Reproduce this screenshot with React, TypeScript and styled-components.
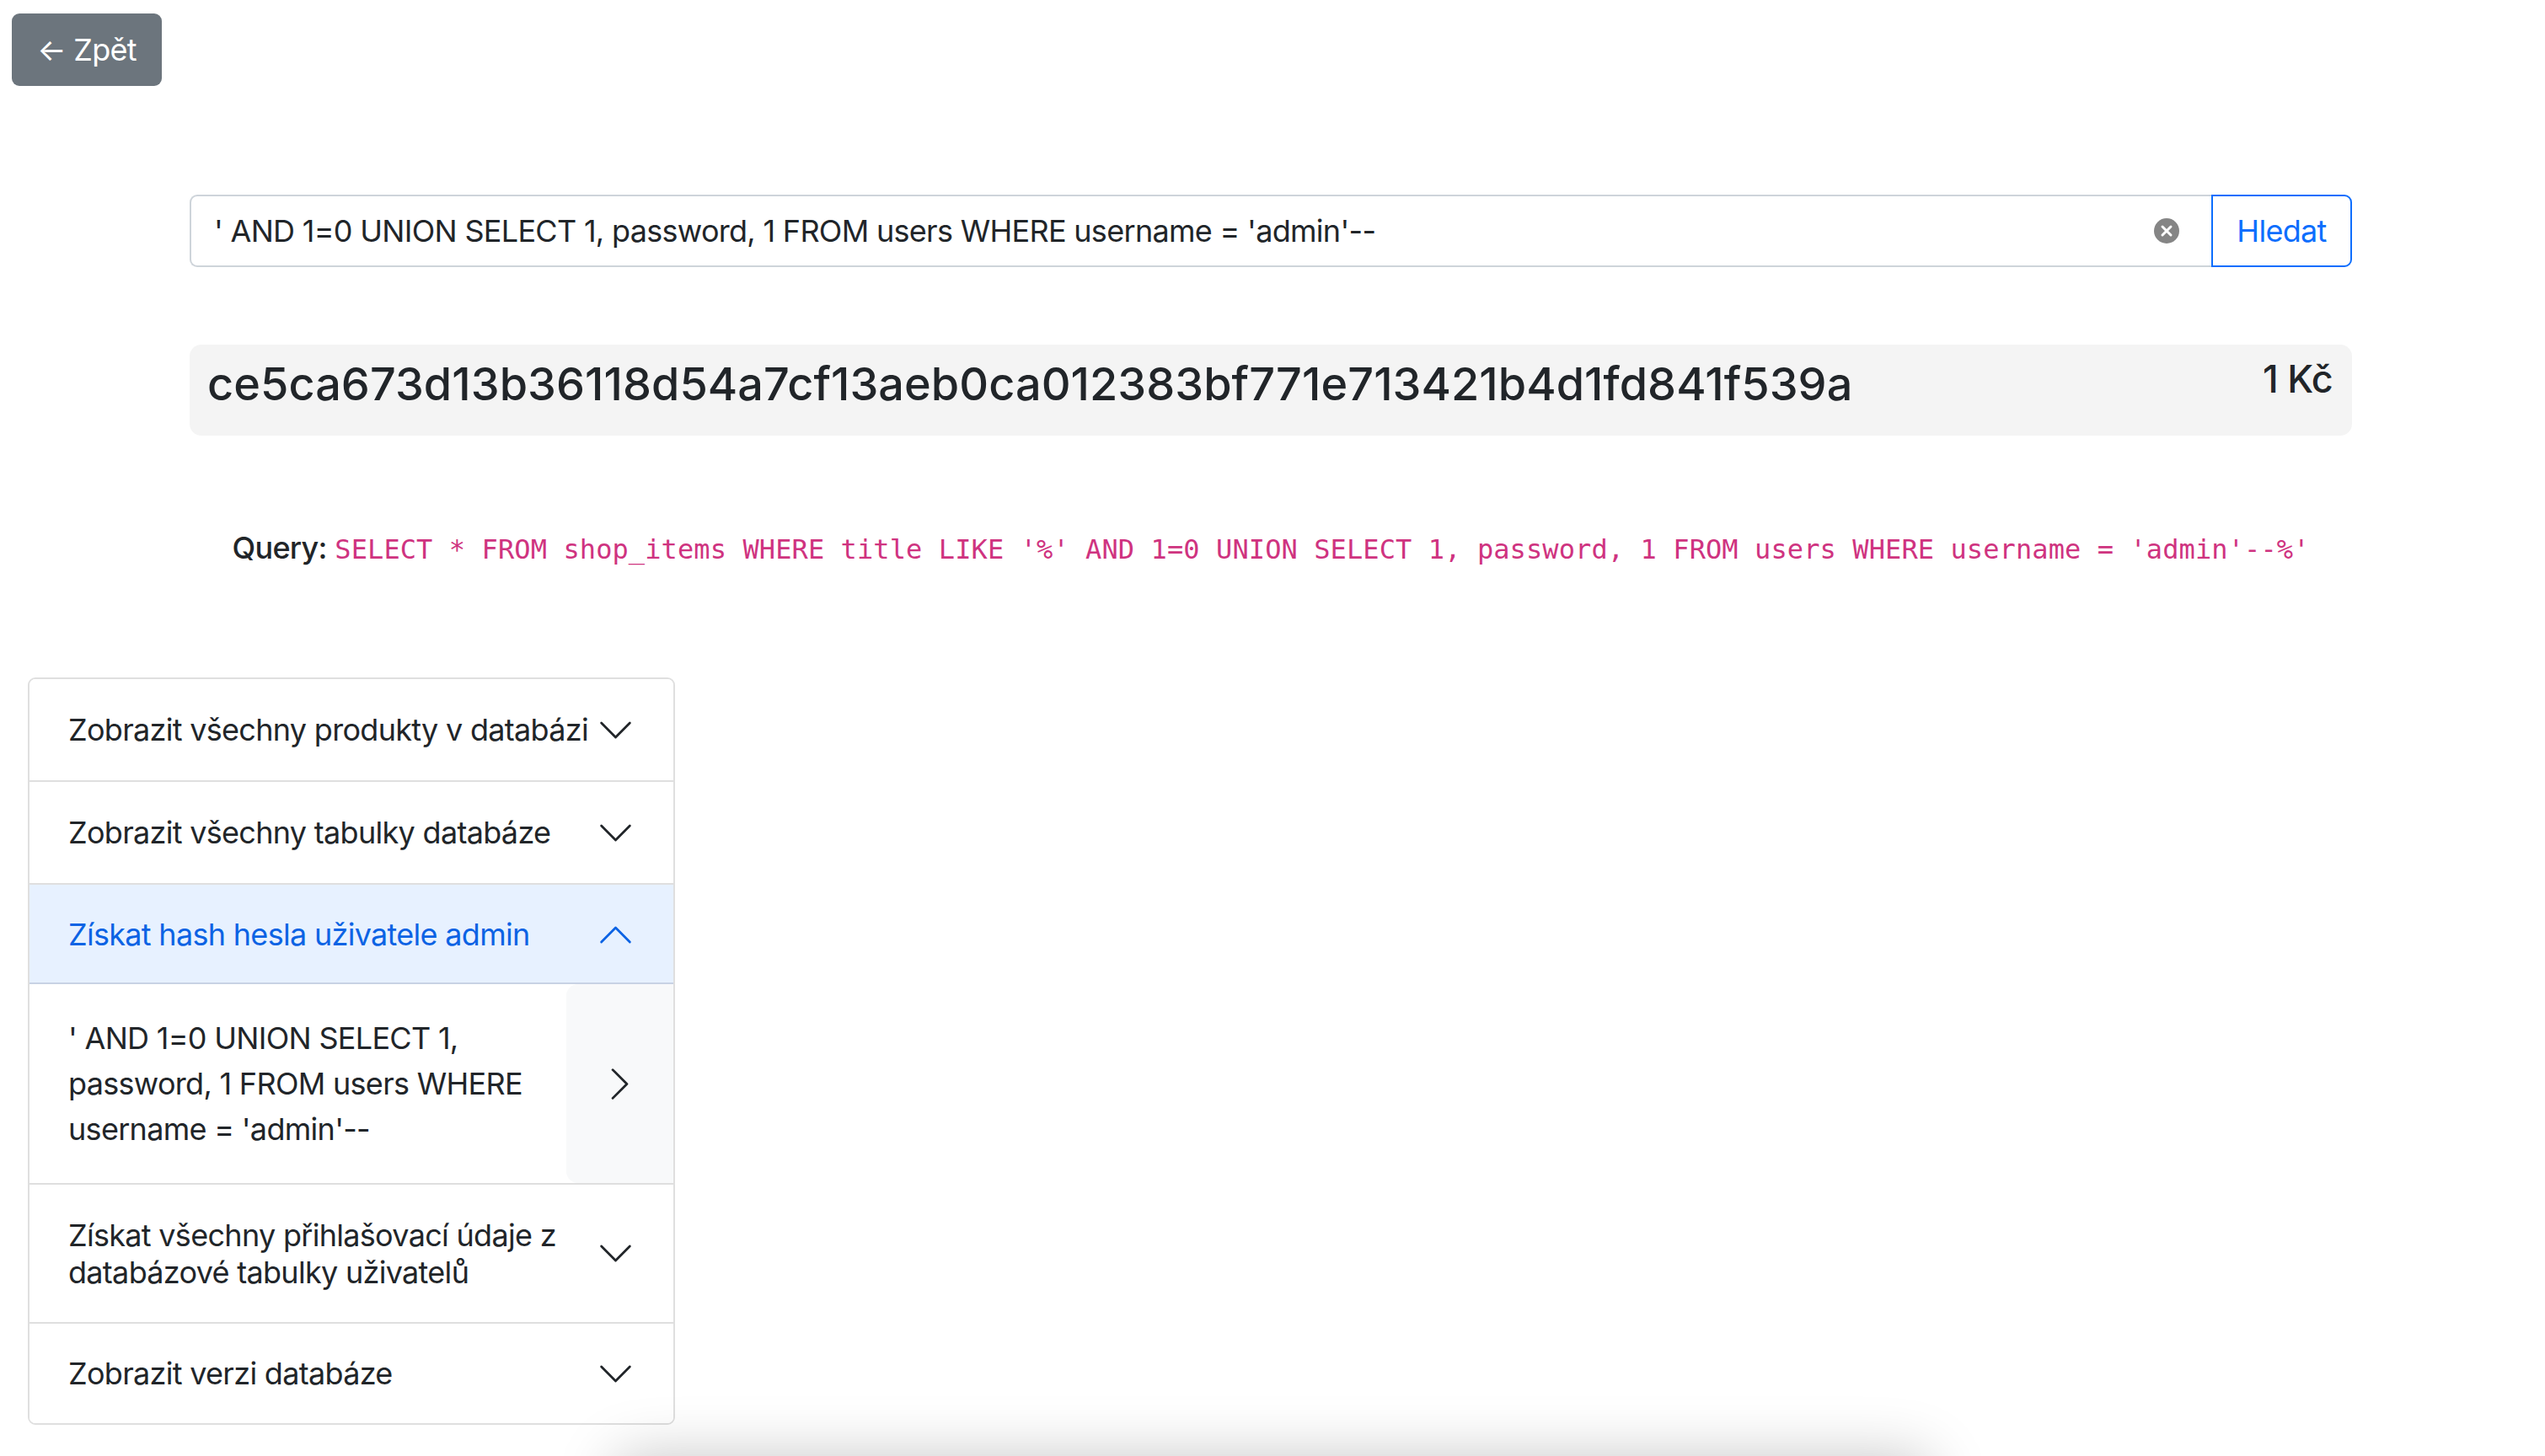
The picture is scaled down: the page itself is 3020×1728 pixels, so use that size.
import React from 'react';
import styled, { createGlobalStyle } from 'styled-components';

const GlobalStyle = createGlobalStyle`
    * {
        box-sizing: border-box;
    }
    body {
        margin: 0;
        background-color: #FFFFFF;
        color: #212529;
        font-family: Inter, "Liberation Sans", sans-serif;
        font-size: 36px;
        line-height: 54px;
        letter-spacing: -0.7px;
    }
`;

const Page = styled.div`
    display: flex;
    flex-direction: column;
    align-items: flex-start;
    height: 1728px;
    padding: 16px 0 0 14px;
    overflow: hidden;
`;

const BackButton = styled.button`
    width: 178px;
    height: 86px;
    padding: 0;
    border: none;
    border-radius: 9px;
    background-color: #6c757d;
    color: #FFFFFF;
    font: inherit;
    letter-spacing: inherit;
`;

const Content = styled.div`
    display: flex;
    flex-direction: column;
    width: 2566px;
    margin: 129px 0 0 211px;
`;

const SearchGroup = styled.form`
    display: flex;
    height: 86px;
`;

const SearchField = styled.div`
    flex: 1;
    display: flex;
    align-items: center;
    padding: 0 38px 0 27px;
    border: 2px solid #ced4da;
    border-right: none;
    border-radius: 9px 0 0 9px;
`;

const SearchInput = styled.input`
    flex: 1;
    border: none;
    outline: none;
    padding: 0;
    color: #212529;
    font: inherit;
    letter-spacing: inherit;
`;

const SearchButton = styled.button`
    width: 167px;
    padding: 0;
    border: 2px solid #0d6efd;
    border-radius: 0 9px 9px 0;
    background-color: #FFFFFF;
    color: #0d6efd;
    font: inherit;
    letter-spacing: inherit;
`;

const ResultCard = styled.div`
    display: flex;
    justify-content: space-between;
    align-items: flex-start;
    height: 108px;
    margin-top: 92px;
    padding: 14px 23px 0 21px;
    border-radius: 14px;
    background-color: #f4f4f4;
`;

const ResultTitle = styled.h3`
    margin: 0;
    font-size: 54px;
    font-weight: 500;
    line-height: 65px;
    letter-spacing: 0.05px;
`;

const ResultPrice = styled.span`
    font-size: 45px;
    font-weight: 500;
    line-height: 54px;
`;

const QueryRow = styled.p`
    margin: 106px 0 0;
    text-align: center;
`;

const QueryLabel = styled.span`
    font-weight: 500;
`;

const QueryCode = styled.code`
    color: #cf3380;
    font-family: "DejaVu Sans Mono", monospace;
    font-size: 32px;
    letter-spacing: 0.1px;
`;

const Accordion = styled.div`
    display: flex;
    flex-direction: column;
    width: 768px;
    margin: 125px 0 0 19px;
    border: 2px solid #dfdfdf;
    border-radius: 9px;
    overflow: hidden;
`;

const Item = styled.div`
    & + & {
        border-top: 2px solid #dfdfdf;
    }
`;

const ItemButton = styled.div<{ $open?: boolean; $tight?: boolean }>`
    display: flex;
    justify-content: space-between;
    align-items: center;
    gap: 8px;
    padding: ${({ $open, $tight }) => ($open || $tight ? '36.5px' : '37.5px')} 46px;
    background-color: ${({ $open }) => ($open ? '#e7f1ff' : '#FFFFFF')};
    box-shadow: ${({ $open }) => ($open ? 'inset 0 -2px 0 #c8d2e4' : 'none')};
    color: ${({ $open }) => ($open ? '#0c63e4' : '#212529')};
    line-height: 44px;
`;

const ItemBody = styled.div`
    display: flex;
    height: 236px;
`;

const BodyText = styled.div`
    flex: 1;
    padding: 37px 40px 0 46px;
`;

const BodySide = styled.div`
    display: flex;
    justify-content: center;
    align-items: center;
    width: 127px;
    border-radius: 14px 0 0 14px;
    background-color: #f8f9fa;
`;

const ShadowBox = styled.div`
    position: fixed;
    top: 1728px;
    left: 730px;
    width: 1560px;
    height: 100px;
    border-radius: 20px;
    box-shadow: 0 0 70px rgba(0, 0, 0, 0.22);
`;

const Chevron: React.FC<{ up?: boolean }> = ({ up }) => (
    <svg width="45" height="45" viewBox="0 0 16 16" fill="currentColor" style={{ flexShrink: 0, transform: up ? 'rotate(180deg)' : undefined }}>
        <path fillRule="evenodd" d="M1.646 4.646a.5.5 0 0 1 .708 0L8 10.293l5.646-5.647a.5.5 0 0 1 .708.708l-6 6a.5.5 0 0 1-.708 0l-6-6a.5.5 0 0 1 0-.708z" />
    </svg>
);

const ChevronRight: React.FC = () => (
    <svg width="45" height="45" viewBox="0 0 16 16" fill="#212529">
        <path fillRule="evenodd" d="M4.646 1.646a.5.5 0 0 1 .708 0l6 6a.5.5 0 0 1 0 .708l-6 6a.5.5 0 0 1-.708-.708L10.293 8 4.646 2.354a.5.5 0 0 1 0-.708z" />
    </svg>
);

const ClearIcon: React.FC = () => (
    <svg width="30" height="30" viewBox="0 0 30 30">
        <circle cx="15" cy="15" r="15" fill="#858585" />
        <path d="M10 10l10 10M20 10L10 20" stroke="#FFFFFF" strokeWidth="3" strokeLinecap="round" />
    </svg>
);

const INJECTION = "' AND 1=0 UNION SELECT 1, password, 1 FROM users WHERE username = 'admin'--";

const App: React.FC = () => {
    return (
        <Page>
            <GlobalStyle />
            <BackButton>← Zpět</BackButton>
            <Content>
                <SearchGroup>
                    <SearchField>
                        <SearchInput defaultValue={INJECTION} />
                        <ClearIcon />
                    </SearchField>
                    <SearchButton type="button">Hledat</SearchButton>
                </SearchGroup>
                <ResultCard>
                    <ResultTitle>ce5ca673d13b36118d54a7cf13aeb0ca012383bf771e713421b4d1fd841f539a</ResultTitle>
                    <ResultPrice>1 Kč</ResultPrice>
                </ResultCard>
                <QueryRow>
                    <QueryLabel>Query:</QueryLabel>{' '}
                    <QueryCode>SELECT * FROM shop_items WHERE title LIKE '%{INJECTION}%'</QueryCode>
                </QueryRow>
            </Content>
            <Accordion>
                <Item>
                    <ItemButton>Zobrazit všechny produkty v databázi<Chevron /></ItemButton>
                </Item>
                <Item>
                    <ItemButton>Zobrazit všechny tabulky databáze<Chevron /></ItemButton>
                </Item>
                <Item>
                    <ItemButton $open>Získat hash hesla uživatele admin<Chevron up /></ItemButton>
                    <ItemBody>
                        <BodyText>{INJECTION}</BodyText>
                        <BodySide><ChevronRight /></BodySide>
                    </ItemBody>
                </Item>
                <Item>
                    <ItemButton>Získat všechny přihlašovací údaje z databázové tabulky uživatelů<Chevron /></ItemButton>
                </Item>
                <Item>
                    <ItemButton $tight>Zobrazit verzi databáze<Chevron /></ItemButton>
                </Item>
            </Accordion>
            <ShadowBox />
        </Page>
    );
};

export default App;
